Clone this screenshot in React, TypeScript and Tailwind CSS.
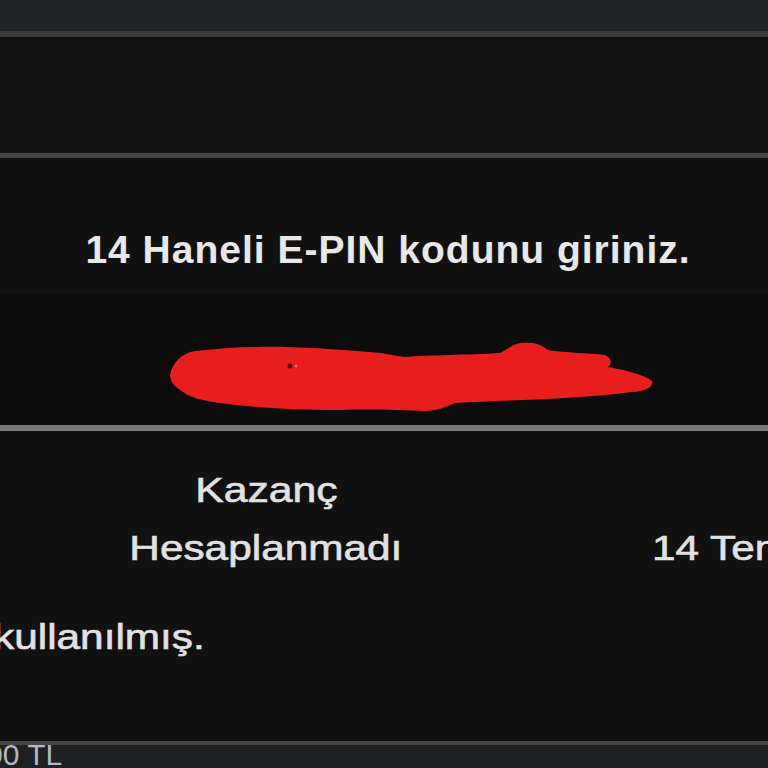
import React from "react";

export default function App() {
  const txt = "text-[#e2e2e2] text-[35px] leading-[40px] inline-block whitespace-nowrap [-webkit-text-stroke:0.6px_#e2e2e2]";
  return (
    <div className="w-[768px] h-[768px] overflow-hidden bg-[#111111] flex flex-col" style={{ fontFamily: "'Liberation Sans', Arial, sans-serif" }}>
      <div className="h-[31px] bg-[#222327] shrink-0" />
      <div className="h-[6px] bg-[#3b3c3c] shrink-0" />
      <div className="h-[116px] bg-[#121212] shrink-0" />
      <div className="h-[5px] bg-[#444444] shrink-0" />
      <div className="h-[137px] bg-[#111111] shrink-0 flex justify-center">
        <h1 className="text-[39px] leading-[44px] font-bold text-[#e8e8e8] tracking-[1px] pt-[70px] whitespace-nowrap pl-[8px]">14 Haneli E-PIN kodunu giriniz.</h1>
      </div>
      <div className="h-[130px] bg-[#0c0c0c] shrink-0 relative">
        <svg className="absolute left-0 top-0" width="768" height="130" viewBox="0 0 768 130">
          <path
            d="M170 80 C172 68 182 58 195 56 C215 54 235 52 255 52 C290 51 330 54 370 57 C385 58 395 61 405 62 C425 60 470 60 500 58 C508 54 512 50 520 48 C530 47 540 48 548 55 C565 58 590 58 605 60 C612 63 612 69 608 72 C625 75 645 80 652 86 C654 92 645 96 632 97 C610 100 590 101 565 103 C530 105 490 106 455 108 C445 112 438 116 425 116 C400 115 370 114 340 115 C300 115 265 113 235 110 C210 107 192 104 183 97 C175 92 170 87 170 80 Z"
            fill="#e81e1e"
          />
          <circle cx="290" cy="71" r="2.5" fill="#5a0808" />
          <circle cx="296" cy="71" r="1.5" fill="#f26a6a" />
        </svg>
      </div>
      <div className="h-[6px] bg-[#7a7a7a] shrink-0" />
      <div className="flex-1 bg-[#111111] flex flex-col">
        <div className="flex pt-[39px]">
          <div className="w-[532px] shrink-0 flex flex-col items-center gap-[18px]">
            <span className={txt + " scale-x-[1.22]"}>Kazanç</span>
            <span className={txt + " scale-x-[1.21]"}>Hesaplanmadı</span>
          </div>
          <div className="flex flex-col gap-[18px] pl-[120px] shrink-0">
            <span className={txt}>&nbsp;</span>
            <span className={txt + " scale-x-[1.21] origin-left"}>14 Temmuz</span>
          </div>
        </div>
        <div className="mt-[49px] -ml-[7px]">
          <span className={txt + " scale-x-[1.21] origin-left"}>kullanılmış.</span>
        </div>
      </div>
      <div className="h-[4px] bg-[#474747] shrink-0" />
      <div className="h-[23px] bg-[#1f2024] shrink-0 overflow-hidden relative">
        <span className="absolute left-[-14px] top-[-7px] text-[30px] leading-[34px] text-[#b4b8c0] whitespace-nowrap">00 TL</span>
      </div>
    </div>
  );
}
